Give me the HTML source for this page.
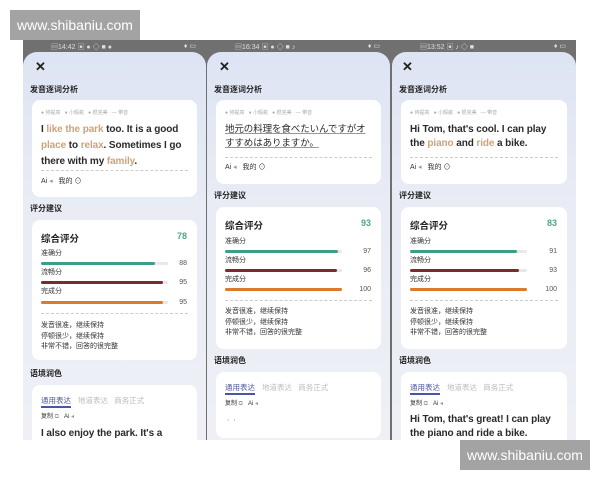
<!DOCTYPE html>
<html><head><meta charset="utf-8"><style>
*{margin:0;padding:0;box-sizing:border-box}
body{width:600px;height:480px;background:#fff;position:relative;overflow:hidden;font-family:"Liberation Sans","Noto Sans CJK SC",sans-serif;color:#222}
.a{position:absolute;white-space:nowrap}
.band{position:absolute;left:23px;top:40px;width:553px;height:400px;background:#707070}
.p{position:absolute;top:40px;height:400px;overflow:hidden}
.scr{position:absolute;left:0;right:0;top:12px;bottom:0;border-radius:14px 14px 0 0;background:linear-gradient(#dde4f3,#e9ecf5 40%,#eef0f6)}
.sb{position:absolute;top:2px;font-size:7px;color:#ddd}
.card{position:absolute;left:9px;right:9px;background:#fff;border-radius:8px}
.h{font-size:8px;font-weight:bold;color:#222;line-height:10px}
.leg{font-size:5px;color:#aaa;line-height:8px}
.t{font-size:10px;font-weight:bold;color:#2a2a2a;line-height:14px;letter-spacing:-0.1px}
.o{color:#cfa27a}
.dash{position:absolute;left:9px;right:9px;height:0;border-top:1px dashed #ccc}
.sm{font-size:7px;color:#333;line-height:10px}
.g{color:#999}
.bar{position:absolute;left:9px;height:3px;border-radius:2px;background:#e8e8e8}
.bar i{position:absolute;left:0;top:0;bottom:0;border-radius:2px}
.num{font-size:7px;color:#555;position:absolute;right:10px}
.wm{position:absolute;background:#a3a3a3;color:#fff;font-size:14px;line-height:30px;text-align:center;width:130px;height:30px}
.x{font-size:13px;font-weight:bold;color:#222}
</style></head><body>
<div class="wm" style="left:10px;top:10px">www.shibaniu.com</div>
<div class="band"></div>

<!-- Panel 1 -->
<div class="p" style="left:23px;width:183px">
<div class="sb" style="left:28px">▤14:42 ▣ ● ◇ ■ ●</div><div class="sb" style="right:10px">♦ ▭</div>
<div class="scr">
<div class="a x" style="left:12px;top:7px">✕</div>
<div class="a h" style="left:7px;top:33px">发音逐词分析</div>
<div class="card" style="top:48px;height:97px">
 <div class="a leg" style="left:9px;top:9px">● 待提高 &nbsp; ● 小瑕疵 &nbsp; ● 很完美 &nbsp; — 带音</div>
 <div class="a t" style="left:9px;top:22px;line-height:16px">I <span class="o">like the park</span> too. It is a good<br><span class="o">place</span> to <span class="o">relax</span>. Sometimes I go<br>there with my <span class="o">family</span>.</div>
 <div class="dash" style="top:70px"></div>
 <div class="a sm" style="left:9px;top:77px">Ai <span class="g">◂</span> &nbsp; 我的 ⊙</div>
</div>
<div class="a h" style="left:7px;top:152px">评分建议</div>
<div class="card" style="top:168px;height:140px">
 <div class="a" style="left:9px;top:11px;font-size:9.5px;font-weight:bold">综合评分</div>
 <div class="a" style="right:10px;top:11px;font-size:9px;font-weight:bold;color:#4ea585">78</div>
 <div class="a sm" style="left:9px;top:29px">准确分</div>
 <div class="bar" style="top:42px;width:127px"><i style="width:114px;background:#3d9e88"></i></div><div class="num" style="top:40px">88</div>
 <div class="a sm" style="left:9px;top:48px">流畅分</div>
 <div class="bar" style="top:61px;width:127px"><i style="width:122px;background:#7a2b30"></i></div><div class="num" style="top:59px">95</div>
 <div class="a sm" style="left:9px;top:67px">完成分</div>
 <div class="bar" style="top:81px;width:127px"><i style="width:122px;background:#dc7a2c"></i></div><div class="num" style="top:79px">95</div>
 <div class="dash" style="top:93px"></div>
 <div class="a sm" style="left:9px;top:101px;line-height:10.5px">发音很准，继续保持<br>停顿很少，继续保持<br>非常不错，回答的很完整</div>
</div>
<div class="a h" style="left:7px;top:317px">语境润色</div>
<div class="card" style="top:333px;height:80px">
 <div class="a" style="left:9px;top:10px;font-size:7.5px;color:#4a56a0">通用表达</div>
 <div class="a" style="left:9px;top:21px;width:30px;height:1.5px;background:#4a56a0"></div>
 <div class="a" style="left:46px;top:10px;font-size:7.5px;color:#bbb">地道表达 &nbsp; 商务正式</div>
 <div class="a sm" style="left:9px;top:27px;font-size:6px">复制 <span class="g">⧉</span> &nbsp; Ai <span class="g">◂</span></div>
 <div class="a t" style="left:9px;top:42px">I also enjoy the park. It's a</div>
</div>
</div></div>

<!-- Panel 2 -->
<div class="p" style="left:207px;width:183px">
<div class="sb" style="left:28px">▤16:34 ▣ ● ◇ ■ ♪</div><div class="sb" style="right:10px">♦ ▭</div>
<div class="scr">
<div class="a x" style="left:12px;top:7px">✕</div>
<div class="a h" style="left:7px;top:33px">发音逐词分析</div>
<div class="card" style="top:48px;height:84px">
 <div class="a leg" style="left:9px;top:9px">● 待提高 &nbsp; ● 小瑕疵 &nbsp; ● 很完美 &nbsp; — 带音</div>
 <div class="a t" style="left:9px;top:23px;font-weight:normal;font-size:9.5px;text-decoration:underline;text-decoration-color:#999">地元の料理を食べたいんですがオ<br>すすめはありますか。</div>
 <div class="dash" style="top:57px"></div>
 <div class="a sm" style="left:9px;top:63px">Ai <span class="g">◂</span> &nbsp; 我的 ⊙</div>
</div>
<div class="a h" style="left:7px;top:139px">评分建议</div>
<div class="card" style="top:155px;height:142px">
 <div class="a" style="left:9px;top:11px;font-size:9.5px;font-weight:bold">综合评分</div>
 <div class="a" style="right:10px;top:11px;font-size:9px;font-weight:bold;color:#4ea585">93</div>
 <div class="a sm" style="left:9px;top:30px">准确分</div>
 <div class="bar" style="top:43px;width:117px"><i style="width:113px;background:#3d9e88"></i></div><div class="num" style="top:41px">97</div>
 <div class="a sm" style="left:9px;top:49px">流畅分</div>
 <div class="bar" style="top:62px;width:117px"><i style="width:112px;background:#7a2b30"></i></div><div class="num" style="top:60px">96</div>
 <div class="a sm" style="left:9px;top:68px">完成分</div>
 <div class="bar" style="top:81px;width:117px"><i style="width:117px;background:#dc7a2c"></i></div><div class="num" style="top:79px">100</div>
 <div class="dash" style="top:93px"></div>
 <div class="a sm" style="left:9px;top:100px;line-height:10.5px">发音很准，继续保持<br>停顿很少，继续保持<br>非常不错，回答的很完整</div>
</div>
<div class="a h" style="left:7px;top:304px">语境润色</div>
<div class="card" style="top:320px;height:66px">
 <div class="a" style="left:9px;top:10px;font-size:7.5px;color:#4a56a0">通用表达</div>
 <div class="a" style="left:9px;top:21px;width:30px;height:1.5px;background:#4a56a0"></div>
 <div class="a" style="left:46px;top:10px;font-size:7.5px;color:#bbb">地道表达 &nbsp; 商务正式</div>
 <div class="a sm" style="left:9px;top:27px;font-size:6px">复制 <span class="g">⧉</span> &nbsp; Ai <span class="g">◂</span></div>
 <div class="a sm" style="left:11px;top:44px">· &nbsp;·</div>
</div>
</div></div>

<!-- Panel 3 -->
<div class="p" style="left:392px;width:184px">
<div class="sb" style="left:28px">▤13:52 ▣ ♪ ◇ ■</div><div class="sb" style="right:10px">♦ ▭</div>
<div class="scr">
<div class="a x" style="left:10px;top:7px">✕</div>
<div class="a h" style="left:7px;top:33px">发音逐词分析</div>
<div class="card" style="top:48px;height:84px">
 <div class="a leg" style="left:9px;top:9px">● 待提高 &nbsp; ● 小瑕疵 &nbsp; ● 很完美 &nbsp; — 带音</div>
 <div class="a t" style="left:9px;top:23px">Hi Tom, that's cool. I can play<br>the <span class="o">piano</span> and <span class="o">ride</span> a bike.</div>
 <div class="dash" style="top:57px"></div>
 <div class="a sm" style="left:9px;top:63px">Ai <span class="g">◂</span> &nbsp; 我的 ⊙</div>
</div>
<div class="a h" style="left:7px;top:139px">评分建议</div>
<div class="card" style="top:155px;height:142px">
 <div class="a" style="left:9px;top:11px;font-size:9.5px;font-weight:bold">综合评分</div>
 <div class="a" style="right:10px;top:11px;font-size:9px;font-weight:bold;color:#4ea585">83</div>
 <div class="a sm" style="left:9px;top:30px">准确分</div>
 <div class="bar" style="top:43px;width:117px"><i style="width:107px;background:#3d9e88"></i></div><div class="num" style="top:41px">91</div>
 <div class="a sm" style="left:9px;top:49px">流畅分</div>
 <div class="bar" style="top:62px;width:117px"><i style="width:109px;background:#7a2b30"></i></div><div class="num" style="top:60px">93</div>
 <div class="a sm" style="left:9px;top:68px">完成分</div>
 <div class="bar" style="top:81px;width:117px"><i style="width:117px;background:#dc7a2c"></i></div><div class="num" style="top:79px">100</div>
 <div class="dash" style="top:93px"></div>
 <div class="a sm" style="left:9px;top:100px;line-height:10.5px">发音很准，继续保持<br>停顿很少，继续保持<br>非常不错，回答的很完整</div>
</div>
<div class="a h" style="left:7px;top:304px">语境润色</div>
<div class="card" style="top:320px;height:80px">
 <div class="a" style="left:9px;top:10px;font-size:7.5px;color:#4a56a0">通用表达</div>
 <div class="a" style="left:9px;top:21px;width:30px;height:1.5px;background:#4a56a0"></div>
 <div class="a" style="left:46px;top:10px;font-size:7.5px;color:#bbb">地道表达 &nbsp; 商务正式</div>
 <div class="a sm" style="left:9px;top:27px;font-size:6px">复制 <span class="g">⧉</span> &nbsp; Ai <span class="g">◂</span></div>
 <div class="a t" style="left:9px;top:41px">Hi Tom, that's great! I can play<br>the piano and ride a bike.</div>
</div>
</div></div>

<div class="wm" style="left:460px;top:440px">www.shibaniu.com</div>
</body></html>
